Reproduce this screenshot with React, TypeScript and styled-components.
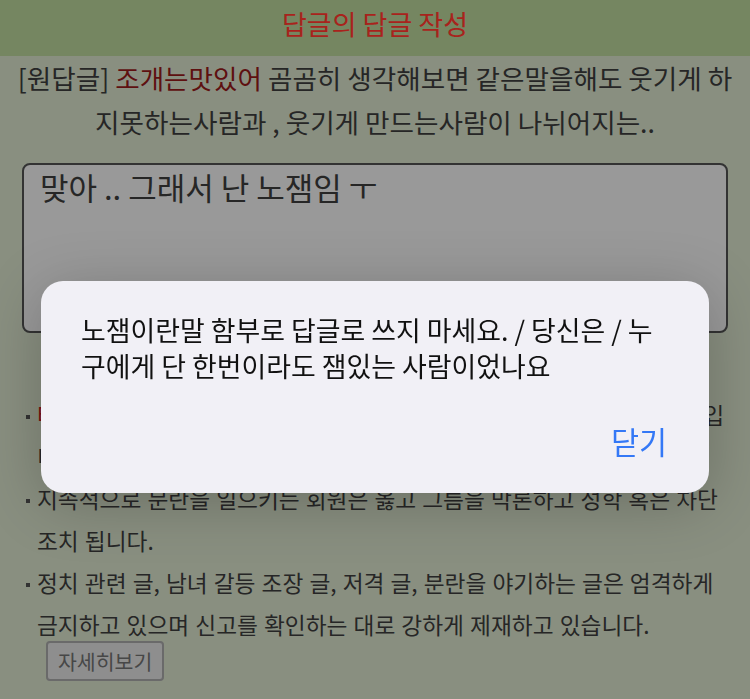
import React from 'react';
import styled, { createGlobalStyle } from 'styled-components';

const GlobalStyle = createGlobalStyle`
  html, body {
    margin: 0;
    padding: 0;
    background: #898f80;
  }

  body {
    font-family: "Noto Sans CJK KR", "Noto Sans", sans-serif;
    color: #232323;
  }

  * {
    box-sizing: border-box;
  }
`;

const NOTICES = [
  {
    highlight: '타인을 비방하거나 불쾌감을 주는 댓글',
    text: '은 경고 없이 삭제될 수 있는 대상입니다.'
  },
  {
    highlight: '',
    text: '지속적으로 문란을 일으키는 회원은 옳고 그름을 막론하고 성학 혹은 차단 조치 됩니다.'
  },
  {
    highlight: '',
    text: '정치 관련 글, 남녀 갈등 조장 글, 저격 글, 분란을 야기하는 글은 엄격하게 금지하고 있으며 신고를 확인하는 대로 강하게 제재하고 있습니다.'
  }
];

const App: React.FC = () => {
  return (
    <>
      <GlobalStyle />
      <Page>
        <Header>
          <Title>답글의 답글 작성</Title>
        </Header>

        <Original>
          [원답글] <Nick>조개는맛있어</Nick> 곰곰히 생각해보면 같은말을해도 웃기게 하지못하는사람과 , 웃기게 만드는사람이 나뉘어지는..
        </Original>

        <Editor>
          <ReplyInput defaultValue="맞아 .. 그래서 난 노잼임 ㅜ" />
        </Editor>

        <NoticeList>
          {NOTICES.map((notice, i) => (
            <NoticeItem key={i}>
              <Dot />
              <NoticeText>
                {notice.highlight && <Warn>{notice.highlight}</Warn>}
                {notice.text}
                {i === NOTICES.length - 1 && <MoreButton>자세히보기</MoreButton>}
              </NoticeText>
            </NoticeItem>
          ))}
        </NoticeList>
      </Page>

      <Overlay>
        <Alert>
          <AlertMessage>
            노잼이란말 함부로 답글로 쓰지 마세요. / 당신은 / 누구에게 단 한번이라도 잼있는 사람이었나요
          </AlertMessage>
          <AlertActions>
            <AlertButton>닫기</AlertButton>
          </AlertActions>
        </Alert>
      </Overlay>
    </>
  );
};

// Styled Components
const Page = styled.div`
  width: 750px;
  min-height: 699px;
  display: flex;
  flex-direction: column;
`;

const Header = styled.header`
  height: 56px;
  background: #758661;
  display: flex;
  justify-content: center;
`;

const Title = styled.h1`
  margin: 0;
  font-size: 27px;
  font-weight: 400;
  line-height: 48px;
  color: #a8231c;
`;

const Original = styled.p`
  margin: 0;
  padding: 0 15px;
  font-size: 26.6px;
  line-height: 44px;
  text-align: center;
  color: #262626;
`;

const Nick = styled.span`
  color: #5e1010;
`;

const Editor = styled.div`
  padding: 19px 22px 0;
`;

const ReplyInput = styled.textarea`
  display: block;
  width: 100%;
  height: 170px;
  margin: 0;
  padding: 2px 16px;
  border: 2px solid #333;
  border-radius: 8px;
  background: #999;
  font-family: "Noto Sans CJK KR", "Noto Sans", sans-serif;
  font-size: 31px;
  line-height: 40px;
  color: #262626;
  resize: none;
  outline: none;
`;

const NoticeList = styled.ul`
  list-style: none;
  margin: 61px 0 0;
  padding: 0 22px 0 26px;
`;

const NoticeItem = styled.li`
  display: flex;
  align-items: flex-start;
  gap: 7px;
`;

const Dot = styled.span`
  flex-shrink: 0;
  width: 4px;
  height: 4px;
  margin-top: 21px;
  background: #333;
`;

const NoticeText = styled.div`
  flex: 1;
  font-size: 22.7px;
  line-height: 42px;
  word-spacing: 1px;
  color: #262626;
`;

const Warn = styled.span`
  color: #7a1010;
`;

const MoreButton = styled.button`
  display: block;
  margin: -5px 0 0 9px;
  padding: 0 10px;
  height: 40px;
  border: 2px solid #6a6a6a;
  border-radius: 4px;
  background: #8e8e8e;
  font-family: "Noto Sans CJK KR", "Noto Sans", sans-serif;
  font-size: 20.5px;
  color: #474747;
`;

const Overlay = styled.div`
  position: fixed;
  inset: 0;
  display: flex;
  justify-content: center;
  align-items: flex-start;
  padding-top: 281px;
`;

const Alert = styled.div`
  width: 668px;
  height: 212px;
  display: flex;
  flex-direction: column;
  padding: 31px 40px 0;
  border-radius: 22px;
  background: #f1f0f6;
  box-shadow: 0 10px 60px rgba(0, 0, 0, 0.22);
`;

const AlertMessage = styled.p`
  margin: 0;
  font-size: 26.9px;
  line-height: 36px;
  color: #111;
`;

const AlertActions = styled.div`
  display: flex;
  justify-content: flex-end;
  margin-top: 37px;
  padding-right: 2px;
`;

const AlertButton = styled.button`
  padding: 0;
  border: none;
  background: none;
  font-family: "Noto Sans CJK KR", "Noto Sans", sans-serif;
  font-size: 30.5px;
  line-height: 40px;
  color: #3478f6;
`;

export default App;
